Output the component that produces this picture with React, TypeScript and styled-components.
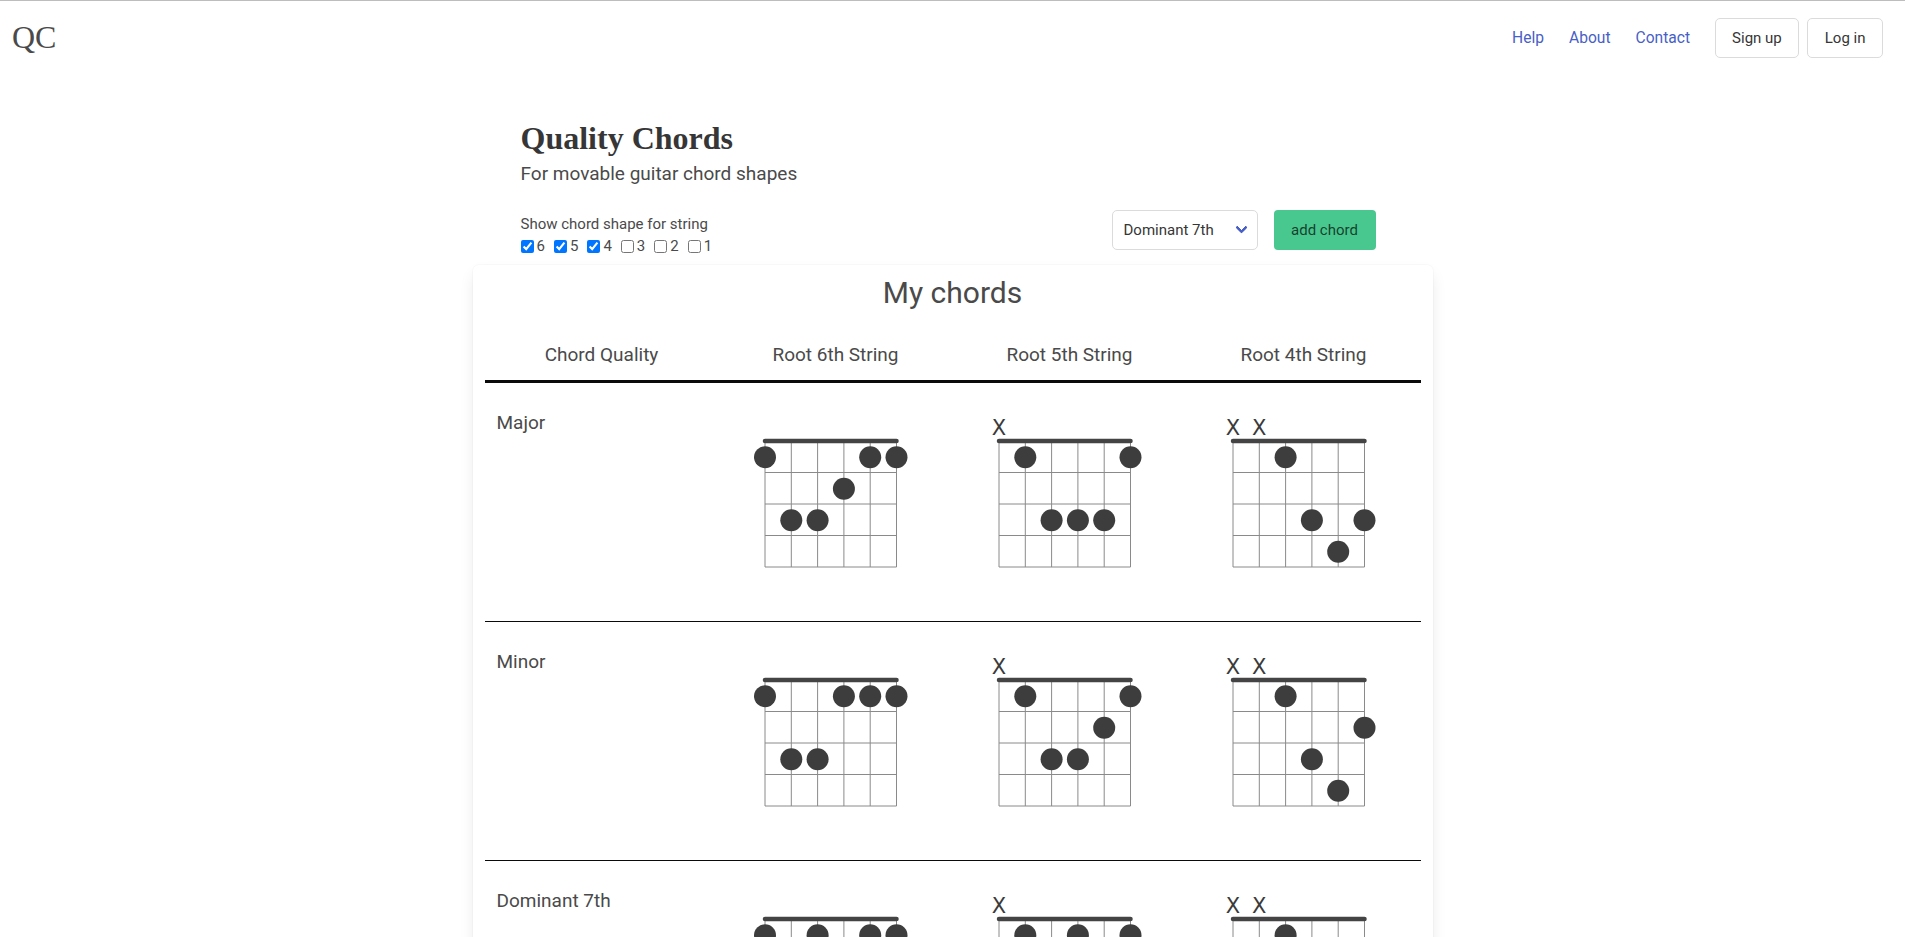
import React from "react";
import styled, { createGlobalStyle } from "styled-components";

const GlobalStyle = createGlobalStyle`
  html, body { margin: 0; padding: 0; background: #ffffff; }
  body { font-family: Roboto, "Noto Sans", Arial, sans-serif; color: #4a4a4a; }
  *, *::before, *::after { box-sizing: border-box; }
`;

const Page = styled.div`
  height: 100vh;
  overflow: hidden;
`;

/* ---------- Navbar ---------- */
const Nav = styled.nav`
  display: flex;
  align-items: center;
  justify-content: space-between;
  height: 74px;
  border-top: 1px solid #bdbdbd;
  padding: 0 22px 0 12px;
`;

const Brand = styled.a`
  font-family: "Liberation Serif", "Times New Roman", serif;
  font-size: 32px;
  line-height: 1.1;
  color: #4a4a4a;
  text-decoration: none;
`;

const NavEnd = styled.div`
  display: flex;
  align-items: center;
`;

const NavLink = styled.a`
  padding: 0 12.5px;
  font-size: 15.6px;
  line-height: 24px;
  color: #485fc7;
  text-decoration: none;
`;

const NavButtons = styled.div`
  display: flex;
  gap: 8px;
  margin-left: 12px;
`;

const OutlineButton = styled.button`
  height: 40px;
  padding: 0 16.5px;
  font-family: inherit;
  font-size: 15px;
  color: #363636;
  background: #ffffff;
  border: 1px solid #dbdbdb;
  border-radius: 5px;
`;

/* ---------- Header ---------- */
const Header = styled.header`
  width: 864px;
  margin: 44px auto 0;
`;

const Title = styled.h1`
  margin: 0;
  font-family: "Liberation Serif", "Times New Roman", serif;
  font-weight: 700;
  font-size: 32px;
  line-height: 40px;
  color: #363636;
`;

const Subtitle = styled.p`
  margin: 2px 0 0;
  font-size: 19px;
  line-height: 28px;
  color: #4a4a4a;
`;

const Controls = styled.div`
  display: flex;
  justify-content: space-between;
  align-items: flex-start;
  margin-top: 22px;
`;

const StringPicker = styled.div`
  padding-top: 3px;
`;

const PickerLabel = styled.div`
  font-size: 15px;
  line-height: 22px;
`;

const CheckRow = styled.div`
  display: flex;
  align-items: center;
  height: 22px;
`;

const CheckItem = styled.label`
  display: inline-flex;
  align-items: center;
  margin-right: 9px;
  font-size: 15px;
  line-height: 22px;
`;

const CheckBox = styled.input`
  width: 13px;
  height: 13px;
  margin: 0 3px 0 0;
`;

const Actions = styled.div`
  display: flex;
  gap: 16px;
  margin-right: 9px;
`;

const SelectWrap = styled.div`
  position: relative;
  width: 146px;
  height: 40px;
  &::after {
    content: "";
    position: absolute;
    right: 12px;
    top: 50%;
    width: 9px;
    height: 9px;
    margin-top: -7px;
    border-left: 3px solid #485fc7;
    border-bottom: 3px solid #485fc7;
    border-radius: 2px;
    transform: rotate(-45deg);
    pointer-events: none;
  }
`;

const Select = styled.select`
  appearance: none;
  width: 100%;
  height: 100%;
  padding: 0 36px 0 11px;
  font-family: inherit;
  font-size: 15px;
  color: #363636;
  background: #ffffff;
  border: 1px solid #dbdbdb;
  border-radius: 5px;
`;

const AddButton = styled.button`
  width: 102px;
  height: 40px;
  font-family: inherit;
  font-size: 15px;
  color: rgba(0, 0, 0, 0.7);
  background: #48c78e;
  border: none;
  border-radius: 4px;
`;

/* ---------- Card / table ---------- */
const Card = styled.section`
  width: 960px;
  margin: 8px auto 0;
  padding: 10px 12px 0;
  background: #ffffff;
  border-radius: 6px;
  box-shadow: 0 0.5em 1em -0.125em rgba(10, 10, 10, 0.1),
    0 0 0 1px rgba(10, 10, 10, 0.02);
`;

const CardTitle = styled.h2`
  margin: 0;
  text-align: center;
  font-size: 30px;
  font-weight: 400;
  line-height: 36px;
  color: #4a4a4a;
`;

const HeadRow = styled.div`
  display: grid;
  grid-template-columns: repeat(4, 1fr);
  border-bottom: 3px solid #0a0a0a;
`;

const HeadCell = styled.div`
  padding: 32px 0 13px;
  text-align: center;
  font-size: 19px;
  line-height: 24px;
  color: #4a4a4a;
`;

const BodyRow = styled.div`
  display: grid;
  grid-template-columns: repeat(4, 1fr);
  height: 239px;
  border-bottom: 1px solid #0a0a0a;
`;

const LabelCell = styled.div`
  padding: 25px 12px 0;
  font-size: 19px;
  line-height: 30px;
  color: #4a4a4a;
`;

const DiagramCell = styled.div`
  display: flex;
  justify-content: center;
  padding-top: 30px;
`;

const DiagramSvg = styled.svg`
  display: block;
  overflow: visible;
`;

const MuteMark = styled.text`
  font-family: "DejaVu Sans", "Liberation Sans", sans-serif;
  font-size: 21px;
  fill: #3a3a3a;
`;

/* ---------- Chord data ---------- */
type Dot = [number, number]; // [string 6..1, fret row 1..4]
type Shape = { muted: number[]; dots: Dot[] };
type ChordRow = { name: string; shapes: Shape[] };

const chords: ChordRow[] = [
  {
    name: "Major",
    shapes: [
      { muted: [], dots: [[6, 1], [2, 1], [1, 1], [3, 2], [5, 3], [4, 3]] },
      { muted: [6], dots: [[5, 1], [1, 1], [4, 3], [3, 3], [2, 3]] },
      { muted: [6, 5], dots: [[4, 1], [3, 3], [1, 3], [2, 4]] },
    ],
  },
  {
    name: "Minor",
    shapes: [
      { muted: [], dots: [[6, 1], [3, 1], [2, 1], [1, 1], [5, 3], [4, 3]] },
      { muted: [6], dots: [[5, 1], [1, 1], [2, 2], [4, 3], [3, 3]] },
      { muted: [6, 5], dots: [[4, 1], [1, 2], [3, 3], [2, 4]] },
    ],
  },
  {
    name: "Dominant 7th",
    shapes: [
      { muted: [], dots: [[6, 1], [4, 1], [2, 1], [1, 1], [3, 2], [5, 3]] },
      { muted: [6], dots: [[5, 1], [3, 1], [1, 1], [4, 3], [2, 3]] },
      { muted: [6, 5], dots: [[4, 1], [2, 2], [3, 3], [1, 3]] },
    ],
  },
];

const GX = 14;
const NUT = 28;
const SS = 26.3;
const FS = 31.5;
const W = GX + SS * 5;
const H = NUT + FS * 4;

const sx = (s: number) => GX + (6 - s) * SS;

function ChordDiagram({ shape }: { shape: Shape }) {
  return (
    <DiagramSvg width={170} height={170} viewBox="0 0 170 170">
      {[0, 1, 2, 3, 4, 5].map((i) => (
        <line
          key={"s" + i}
          x1={GX + i * SS}
          x2={GX + i * SS}
          y1={NUT}
          y2={H}
          stroke="#8a8a8a"
          strokeWidth={1}
        />
      ))}
      {[1, 2, 3, 4].map((j) => (
        <line
          key={"f" + j}
          x1={GX}
          x2={W}
          y1={NUT + j * FS}
          y2={NUT + j * FS}
          stroke="#8a8a8a"
          strokeWidth={1}
        />
      ))}
      <line
        x1={GX}
        x2={W}
        y1={NUT}
        y2={NUT}
        stroke="#444444"
        strokeWidth={4.5}
        strokeLinecap="round"
      />
      {shape.muted.map((s) => (
        <MuteMark key={"m" + s} x={sx(s)} y={NUT - 6} textAnchor="middle">
          X
        </MuteMark>
      ))}
      {shape.dots.map(([s, r]) => (
        <circle
          key={"d" + s + r}
          cx={sx(s)}
          cy={NUT + (r - 0.5) * FS + 0.5}
          r={11}
          fill="#3d3d3d"
        />
      ))}
    </DiagramSvg>
  );
}

export default function App() {
  const strings = [6, 5, 4, 3, 2, 1];
  return (
    <Page>
      <GlobalStyle />
      <Nav>
        <Brand href="#">QC</Brand>
        <NavEnd>
          <NavLink href="#">Help</NavLink>
          <NavLink href="#">About</NavLink>
          <NavLink href="#">Contact</NavLink>
          <NavButtons>
            <OutlineButton>Sign up</OutlineButton>
            <OutlineButton>Log in</OutlineButton>
          </NavButtons>
        </NavEnd>
      </Nav>

      <Header>
        <Title>Quality Chords</Title>
        <Subtitle>For movable guitar chord shapes</Subtitle>
        <Controls>
          <StringPicker>
            <PickerLabel>Show chord shape for string</PickerLabel>
            <CheckRow>
              {strings.map((s) => (
                <CheckItem key={s}>
                  <CheckBox type="checkbox" defaultChecked={s >= 4} />
                  {s}
                </CheckItem>
              ))}
            </CheckRow>
          </StringPicker>
          <Actions>
            <SelectWrap>
              <Select defaultValue="Dominant 7th">
                <option>Major</option>
                <option>Minor</option>
                <option>Dominant 7th</option>
              </Select>
            </SelectWrap>
            <AddButton>add chord</AddButton>
          </Actions>
        </Controls>
      </Header>

      <Card>
        <CardTitle>My chords</CardTitle>
        <HeadRow>
          <HeadCell>Chord Quality</HeadCell>
          <HeadCell>Root 6th String</HeadCell>
          <HeadCell>Root 5th String</HeadCell>
          <HeadCell>Root 4th String</HeadCell>
        </HeadRow>
        {chords.map((c) => (
          <BodyRow key={c.name}>
            <LabelCell>{c.name}</LabelCell>
            {c.shapes.map((sh, i) => (
              <DiagramCell key={i}>
                <ChordDiagram shape={sh} />
              </DiagramCell>
            ))}
          </BodyRow>
        ))}
      </Card>
    </Page>
  );
}
